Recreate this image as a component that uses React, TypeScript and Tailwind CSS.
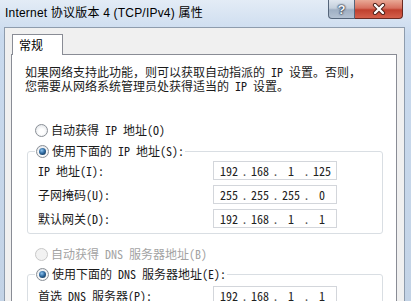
import React from 'react';

// Win7 "Internet 协议版本 4 (TCP/IPv4) 属性" dialog

const mono = "font-['Noto_Sans_Mono_CJK_SC','Noto_Sans_CJK_SC',monospace]";

function Radio({ checked = false, disabled = false }: { checked?: boolean; disabled?: boolean }) {
  return (
    <span
      className={
        'w-[13px] h-[13px] rounded-full border flex items-center justify-center shrink-0 ' +
        (disabled
          ? 'border-[#c8c8c8] bg-[#f2f2f2]'
          : 'border-[#8a8f96] bg-[radial-gradient(circle_at_50%_60%,#ffffff_30%,#d9dde2_100%)]')
      }
    >
      {checked && (
        <span className="w-[7px] h-[7px] rounded-full bg-[radial-gradient(circle_at_40%_35%,#8ec3ef_0%,#2f6aa0_45%,#0d2238_100%)]" />
      )}
    </span>
  );
}

function RadioRow({ label, checked, disabled }: { label: string; checked?: boolean; disabled?: boolean }) {
  return (
    <div className="h-[20px] flex items-center gap-[3px]">
      <Radio checked={checked} disabled={disabled} />
      <span className={disabled ? 'text-[#a3a3a3]' : 'text-[#1a1a1a]'}>{label}</span>
    </div>
  );
}

function IpBox({ parts }: { parts: string[] }) {
  return (
    <div className="w-[124px] h-[19px] border border-[#d3d6db] bg-white flex items-center pl-[3px] text-[#222]">
      {parts.map((p, i) => (
        <React.Fragment key={i}>
          {i > 0 && <span className="w-[7px] text-center text-[#555]">.</span>}
          <span className="w-[24px] text-center">{p}</span>
        </React.Fragment>
      ))}
    </div>
  );
}

function FieldRow({ label, parts }: { label: string; parts: string[] }) {
  return (
    <div className="flex items-center">
      <span className="w-[175px] text-[#1a1a1a]">{label}</span>
      <IpBox parts={parts} />
    </div>
  );
}

export default function App() {
  return (
    <div className="w-[411px] h-[301px] overflow-hidden flex flex-col bg-[linear-gradient(180deg,#e3ecf6_0%,#c9daee_12%,#c3d3e6_100%)]">
      {/* Title bar */}
      <div className="h-[27px] flex justify-between shrink-0">
        <div className="pl-[5px] pt-[6px] text-[12px] leading-[14px] tracking-[0.2px] text-black font-['Liberation_Sans','Noto_Sans_CJK_SC',sans-serif]">
          Internet 协议版本 4 (TCP/IPv4) 属性
        </div>
        <div className="mr-[8px] flex h-[19px]">
          <div className="w-[27px] h-full border border-[#55657a] border-t-0 rounded-bl-[4px] bg-[linear-gradient(180deg,#dfe6ef_0%,#c4cfdc_45%,#9fafc3_55%,#b3c1d2_100%)] flex items-center justify-center">
            <span className="text-[#f4f6f9] font-bold text-[13px] leading-none font-['Liberation_Sans',sans-serif] [text-shadow:0_0_1px_#24344a,0_0_2px_#24344a,0_0_2px_#24344a]">?</span>
          </div>
          <div className="w-[48px] h-full border border-[#6b2a22] border-t-0 border-l-0 rounded-br-[4px] bg-[linear-gradient(180deg,#e9a996_0%,#d7705f_45%,#c0402e_55%,#d4604c_100%)] flex items-center justify-center">
            <svg width="16" height="12" viewBox="0 0 16 12">
              <path d="M4 2 L12 10 M12 2 L4 10" stroke="#4a1e18" strokeWidth="4.2" strokeLinecap="round" />
              <path d="M4 2 L12 10 M12 2 L4 10" stroke="#ffffff" strokeWidth="2.4" strokeLinecap="round" />
            </svg>
          </div>
        </div>
      </div>

      {/* Client area */}
      <div className="ml-[4px] w-[401px] flex-1 border border-[#8e9cad] border-b-0 bg-[#f0f0f0] pl-[6px] pt-[6px] flex flex-col">
        {/* Tab header */}
        <div className="ml-[1px] w-[51px] h-[21px] -mb-px relative z-10 border border-[#898c95] border-b-0 bg-white pl-[6px] pt-[3px] text-[12px] leading-[14px] text-black font-['Noto_Sans_CJK_SC',sans-serif]">
          常规
        </div>

        {/* Tab page */}
        <div className={'w-[386px] flex-1 border border-[#898c95] border-b-0 bg-white pl-[13px] pt-[10px] text-[12px] leading-[14px] ' + mono}>
          <p className="text-[#1a1a1a]">
            如果网络支持此功能，则可以获取自动指派的 IP 设置。否则，
            <br />
            您需要从网络系统管理员处获得适当的 IP 设置。
          </p>

          <div className="ml-[10px] mt-[27px]">
            <RadioRow label="自动获得 IP 地址(O)" />
          </div>

          <fieldset className="ml-[2px] mt-[1px] w-[356px] border border-[#d9dee3] rounded-[3px] p-0 pb-[5px]">
            <legend className="ml-[7px] px-[1px] bg-white">
              <RadioRow label="使用下面的 IP 地址(S):" checked />
            </legend>
            <div className="pl-[10px] flex flex-col gap-[5px]">
              <FieldRow label="IP 地址(I):" parts={['192', '168', '1', '125']} />
              <FieldRow label="子网掩码(U):" parts={['255', '255', '255', '0']} />
              <FieldRow label="默认网关(D):" parts={['192', '168', '1', '1']} />
            </div>
          </fieldset>

          <div className="ml-[10px] mt-[10px]">
            <RadioRow label="自动获得 DNS 服务器地址(B)" disabled />
          </div>

          <fieldset className="ml-[2px] w-[356px] border border-[#d9dee3] rounded-[3px] p-0 pb-[5px]">
            <legend className="ml-[7px] px-[1px] bg-white">
              <RadioRow label="使用下面的 DNS 服务器地址(E):" checked />
            </legend>
            <div className="pl-[10px] pt-[2px] flex flex-col gap-[5px]">
              <FieldRow label="首选 DNS 服务器(P):" parts={['192', '168', '1', '1']} />
            </div>
          </fieldset>
        </div>
      </div>
    </div>
  );
}
